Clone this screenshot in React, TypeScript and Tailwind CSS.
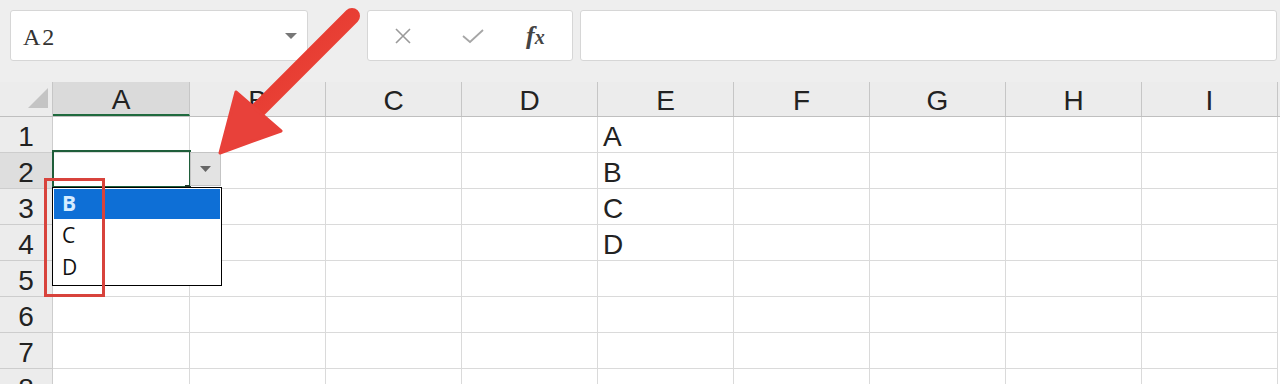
import React from "react";

const cols = ["A", "B", "C", "D", "E", "F", "G", "H", "I"];
const rows = [1, 2, 3, 4, 5, 6, 7, 8];
const eVals: Record<number, string> = { 1: "A", 2: "B", 3: "C", 4: "D" };

export default function App() {
  return (
    <div className="relative w-[1280px] h-[384px] overflow-hidden bg-white font-['Liberation_Sans',Arial,sans-serif] text-[#222]">
      {/* formula bar */}
      <div className="flex h-[82px] bg-[#eeeeee] pt-[10px] pl-[10px] box-border">
        <div className="flex items-center justify-between w-[298px] h-[51px] bg-white border border-[#d6d6d6] rounded-[3px] pl-[12px] pr-[10px]">
          <span className="font-['Liberation_Serif',serif] text-[24px] tracking-[2px] text-[#333] pt-[2px]">A2</span>
          <svg width="12" height="8" viewBox="0 0 12 8">
            <path d="M0 1 L12 1 L6 7 Z" fill="#777" />
          </svg>
        </div>
        <div className="ml-[59px] flex items-center w-[206px] h-[51px] bg-white border border-[#d6d6d6] rounded-[3px]">
          <svg className="ml-[26px]" width="18" height="18" viewBox="0 0 18 18">
            <path d="M2 2 L16 16 M16 2 L2 16" stroke="#9a9a9a" strokeWidth="1.6" fill="none" />
          </svg>
          <svg className="ml-[49px]" width="24" height="18" viewBox="0 0 24 18">
            <path d="M2 9 L9 15 L22 3" stroke="#a6a6a6" strokeWidth="1.8" fill="none" />
          </svg>
          <span className="ml-[41px] font-['Liberation_Serif',serif] italic font-bold text-[#444] text-[26px] leading-none">
            f<span className="text-[20px]">x</span>
          </span>
        </div>
        <div className="ml-[7px] flex-1 h-[51px] bg-white border border-[#d6d6d6] rounded-[3px] mr-[3px]" />
      </div>

      {/* column header */}
      <div className="flex h-[34px] bg-[#ececec] border-b border-[#bfbfbf] box-content">
        <div className="relative w-[53px] h-full border-r border-[#c6c6c6] box-border">
          <svg className="absolute left-[28px] top-[6px]" width="20" height="20" viewBox="0 0 20 20">
            <path d="M20 0 L20 20 L0 20 Z" fill="#c4c4c4" />
          </svg>
        </div>
        {cols.map((c, i) => (
          <div
            key={c}
            className={
              i === 0
                ? "w-[137px] h-full flex items-center justify-center text-[28px] bg-[#dadada] border-r border-[#c6c6c6] border-b-2 border-b-[#1f6a3e] box-border pt-[4px]"
                : "w-[136px] h-full flex items-center justify-center text-[28px] border-r border-[#c6c6c6] box-border pt-[4px]"
            }
          >
            {c}
          </div>
        ))}
      </div>

      {/* rows */}
      {rows.map((r) => (
        <div key={r} className="flex h-[36px]">
          <div
            className={
              r === 2
                ? "w-[53px] h-full flex items-center justify-center text-[28px] bg-[#dedede] border-r border-b border-[#cdcdcd] box-border pt-[4px]"
                : "w-[53px] h-full flex items-center justify-center text-[28px] bg-[#ececec] border-r border-b border-[#cdcdcd] box-border pt-[4px]"
            }
          >
            {r}
          </div>
          {cols.map((c, i) => (
            <div
              key={c}
              className={
                i === 0
                  ? "w-[137px] h-full border-r border-b border-[#dadada] box-border"
                  : "w-[136px] h-full border-r border-b border-[#dadada] box-border flex items-center pl-[5px] text-[28px] pt-[5px]"
              }
            >
              {c === "E" ? eVals[r] ?? "" : ""}
            </div>
          ))}
        </div>
      ))}

      {/* selected cell A2 */}
      <div className="absolute left-[52px] top-[150px] w-[139px] h-[38px] border-2 border-[#1f5e3a]" />
      <div className="absolute left-[185px] top-[185px] w-[6px] h-[4px] bg-[#1f3a2a]" />

      {/* dropdown button */}
      <div className="absolute left-[190px] top-[152px] w-[31px] h-[34px] bg-[#e3e3e3] border border-[#c4c4c4] flex items-center justify-center">
        <svg width="11" height="7" viewBox="0 0 11 7">
          <path d="M0 0 L11 0 L5.5 6 Z" fill="#666" />
        </svg>
      </div>

      {/* dropdown list */}
      <div className="absolute left-[52px] top-[187px] w-[170px] h-[99px] bg-white border border-black p-[1px] box-border text-[21px] font-['Open_Sans',sans-serif]">
        <div className="h-[30px] bg-[#0e6fd6] text-[#d5ecff] font-bold flex items-center pl-[8px]">B</div>
        <div className="h-[33px] flex items-center pl-[8px] text-[#111]">C</div>
        <div className="h-[31px] flex items-center pl-[8px] text-[#111]">D</div>
      </div>

      {/* red highlight rectangle */}
      <div className="absolute left-[44px] top-[178px] w-[61px] h-[119px] border-[3px] border-[#d8433c]" />

      {/* red arrow */}
      <svg className="absolute left-0 top-0" width="1280" height="384" viewBox="0 0 1280 384">
        <defs>
          <linearGradient id="ag" x1="0" y1="0" x2="1" y2="1">
            <stop offset="0" stopColor="#e0332c" />
            <stop offset="1" stopColor="#f04a3c" />
          </linearGradient>
        </defs>
        <line x1="352" y1="16" x2="256" y2="112" stroke="url(#ag)" strokeWidth="16" strokeLinecap="round" />
        <path d="M220 153 L236 92 L281 131 Z" fill="#e8413a" stroke="#e8413a" strokeWidth="3" strokeLinejoin="round" />
      </svg>
    </div>
  );
}
